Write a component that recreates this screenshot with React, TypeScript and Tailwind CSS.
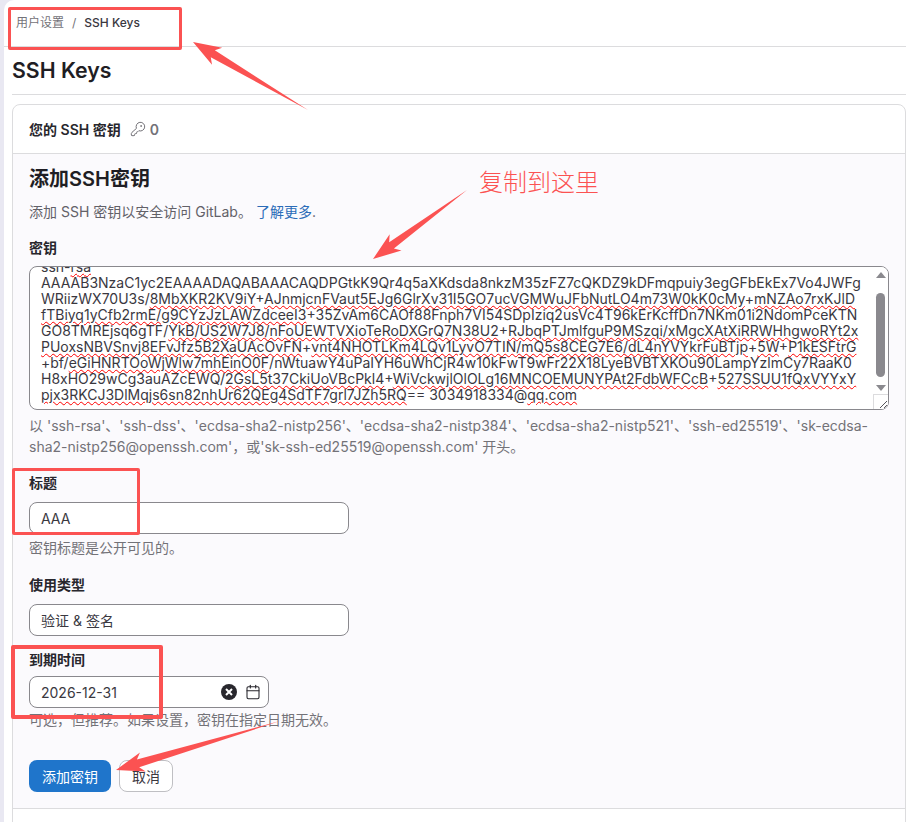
import { KeyRound, Calendar } from 'lucide-react';

const FONT = "font-['Inter','Noto_Sans_CJK_SC',sans-serif]";

// segments split on | : even index plain, odd index has the spell-check squiggle
const KEY_LINES = [
  'ssh-|rsa',
  'AAAAB3NzaC1yc2EAAAADAQABAAACAQDPGtkK9Qr4q5aXKdsda8nkzM35zFZ7cQKDZ9kDFmqpuiy3egGFbEkEx7Vo4JWFg',
  'WRiizWX70U3s/|8MbXKR2KV9iY|+|AJnmjcnFVaut5EJg6GlrXv31I5GO7ucVGMWuJFbNutLO4m73W0kK0cMy|+|mNZAo7rxKJlD',
  '|fTBiyq1yCfb2rmE/g9CYzJzLAWZdceeI3|+35ZvAm6CAOf88Fnph7VI54SDpIziq2usVc4T96kErKcffDn7NKm01i2NdomPceKTN',
  'GO8TMREjsq6gTF/|YkB/US2W7J8/nFoUEWTVXioTeRoDXGrQ7N38U2|+|RJbqPTJmlfguP9MSzqi/xMgcXAtXiRRWHhgwoRYt2x',
  '|PUoxsNBVSnvj8EFvJfz5B2XaUAcOvFN|+|vnt4NHOTLKm4LQv1LyvO7TIN/mQ5s8CEG7E6/dL4nYVYkrFuBTjp|+|5W|+|P1kESFtrG',
  '+bf/|eGiHNRTOoWjWlw7mhEinO0F|/nWtuawY4uPaIYH6uWhCjR4w10kFwT9wFr22X18LyeBVBTXKOu90LampYzlmCy7RaaK0',
  'H8xHO29wCg3auAZcEWQ/|2GsL5t37CkiUoVBcPkl4|+|WiVckwjlOlOLg16MNCOEMUNYPAt2FdbWFCcB|+|527SSUU1fQxVYYxY',
  '|pjx3RKCJ3DlMqjs6sn82nhUr62QEg4SdTF7grl7JZh5RQ|== 3034918334@|qq.com',
];

function Arrow({ x1, y1, x2, y2 }: { x1: number; y1: number; x2: number; y2: number }) {
  // tapered annotation arrow, tip at x2,y2
  const a = Math.atan2(y2 - y1, x2 - x1);
  const p = (d: number, s: number) =>
    `${x2 - Math.cos(a) * d - Math.sin(a) * s},${y2 - Math.sin(a) * d + Math.cos(a) * s}`;
  return (
    <polygon
      fill="#fb5252"
      points={`${x1},${y1} ${p(23, 4)} ${p(28, 10)} ${x2},${y2} ${p(28, -10)} ${p(23, -4)}`}
    />
  );
}

function Box({ className }: { className: string }) {
  return <div className={`absolute border-[3px] border-[#fb5252] rounded-[2px] ${className}`} />;
}

export default function App() {
  return (
    <div className={`${FONT} relative w-[906px] h-[822px] overflow-hidden bg-[#e9e8f2] pl-[4px] text-[#28272d]`}>
      <div className="h-full bg-white rounded-tl-[10px] pl-[8px]">
        <div className="h-[47px] -ml-[8px] pl-[12px] border-b border-[#dcdcde] flex items-start pt-[15px] text-[12px] leading-[16px]">
          <span className="text-[#737278]">用户设置</span>
          <span className="mx-[8px] text-[#737278]">/</span>
          <span className="text-[#3a383f] font-medium">SSH Keys</span>
        </div>

        <div className="h-[48px] border-b border-[#dcdcde] flex items-center">
          <h1 className="-mt-[2px] text-[21.3px] font-semibold text-[#1f1e24] leading-[28px]">SSH Keys</h1>
        </div>

        <div className="mt-[9px] h-[800px] border border-[#dcdcde] rounded-t-[8px]">
          <div className="h-[49px] border-b border-[#dcdcde] flex items-center pl-[16px] text-[14px] font-semibold">
            您的 SSH 密钥
            <KeyRound className="ml-[9px] w-[16px] h-[16px] text-[#737278]" strokeWidth={1.5} />
            <span className="ml-[4px] text-[#737278]">0</span>
          </div>

          <div className="h-[655px] bg-[#fbfafd] border-b border-[#dcdcde] px-[16px] pt-[12px]">
            <h2 className="text-[20px] leading-[26px] font-semibold text-[#1f1e24]">添加SSH密钥</h2>
            <p className="mt-[11px] text-[14px] leading-[18px] text-[#626168]">
              添加 SSH 密钥以安全访问 GitLab。 <span className="text-[#2b6cb8]">了解更多</span>.
            </p>

            <label className="block mt-[18px] text-[14px] leading-[18px] font-semibold">密钥</label>
            <div className="relative mt-[9px] w-[860px] h-[144px] bg-white border border-[#89888d] rounded-[8px] overflow-hidden">
              <div className="-mt-[8px] pl-[11px] text-[14px] leading-[16px] whitespace-nowrap text-[#3a383f]">
                {KEY_LINES.map((line, i) => (
                  <div key={i}>
                    {line.split('|').map((seg, j) => (
                      <span
                        key={j}
                        className={j % 2 === 1 ? 'underline decoration-wavy decoration-[#ff0000] decoration-1 underline-offset-[1px]' : ''}
                      >
                        {seg}
                      </span>
                    ))}
                  </div>
                ))}
              </div>

              <div className="absolute top-0 right-0 bottom-0 w-[15px] bg-white">
                <div className="absolute top-[5px] left-[3px] w-0 h-0 border-x-[5px] border-x-transparent border-b-[6px] border-b-[#8a898e]" />
                <div className="absolute top-[26px] left-[3px] w-[9px] h-[84px] rounded-full bg-[#8a898e]" />
                <div className="absolute top-[118px] left-[3px] w-0 h-0 border-x-[5px] border-x-transparent border-t-[6px] border-t-[#8a898e]" />
              </div>
              <div className="absolute right-0 bottom-0 w-[15px] h-[15px] bg-white border-l border-t border-[#dcdcde]">
                <svg viewBox="0 0 14 14" className="w-full h-full">
                  <path d="M13 6 L6 13 M13 10 L10 13" stroke="#55545a" strokeWidth="1" />
                </svg>
              </div>
            </div>

            <p className="mt-[5px] w-[860px] text-[14px] leading-[21px] text-[#737278]">
              以 'ssh-rsa'、'ssh-dss'、'ecdsa-sha2-nistp256'、'ecdsa-sha2-nistp384'、'ecdsa-sha2-nistp521'、'ssh-ed25519'、'sk-ecdsa-sha2-nistp256@openssh.com'，或'sk-ssh-ed25519@openssh.com' 开头。
            </p>

            <label className="block mt-[17px] text-[14px] leading-[18px] font-semibold">标题</label>
            <div className="mt-[10px] w-[320px] h-[32px] bg-white border border-[#89888d] rounded-[8px] flex items-center pl-[11px] text-[14px] text-[#3a383f]">AAA</div>
            <p className="mt-[5px] text-[14px] leading-[18px] text-[#737278]">密钥标题是公开可见的。</p>

            <label className="block mt-[19px] text-[14px] leading-[18px] font-semibold">使用类型</label>
            <div className="mt-[10px] w-[320px] h-[32px] bg-white border border-[#89888d] rounded-[8px] flex items-center pl-[11px] text-[14px] text-[#3a383f]">验证 &amp; 签名</div>

            <label className="block mt-[15px] text-[14px] leading-[18px] font-semibold">到期时间</label>
            <div className="mt-[7px] w-[240px] h-[32px] bg-white border border-[#89888d] rounded-[8px] flex items-center pl-[11px] pr-[7px] text-[14px] text-[#3a383f]">
              <span className="flex-1">2026-12-31</span>
              <svg viewBox="0 0 16 16" className="w-[16px] h-[16px]">
                <circle cx="8" cy="8" r="8" fill="#28272d" />
                <path d="M5 5 L11 11 M11 5 L5 11" stroke="#fff" strokeWidth="2" />
              </svg>
              <Calendar className="ml-[8px] w-[16px] h-[16px] text-[#28272d]" strokeWidth={1.6} />
            </div>
            <p className="mt-[3px] text-[14px] leading-[18px] text-[#737278]">可选，但推荐。如果设置，密钥在指定日期无效。</p>

            <div className="mt-[31px] flex gap-[8px]">
              <button className="w-[82px] h-[32px] rounded-[8px] bg-[#1f75cb] text-white text-[14px]">添加密钥</button>
              <button className="w-[54px] h-[32px] rounded-[8px] bg-white border border-[#bfbfc3] text-[14px] text-[#3a383f]">取消</button>
            </div>
          </div>
        </div>
      </div>

      {/* red annotations drawn over the screenshot */}
      <Box className="left-[8px] top-[7px] w-[174px] h-[43px]" />
      <Box className="left-[12px] top-[468px] w-[128px] h-[67px]" />
      <Box className="left-[11px] top-[645px] w-[152px] h-[74px] border-[4px]" />
      <svg className="absolute inset-0 pointer-events-none" width="906" height="822">
        <Arrow x1={308} y1={110} x2={193} y2={42} />
        <Arrow x1={467} y1={190} x2={373} y2={259} />
        <Arrow x1={280} y1={721} x2={116} y2={770} />
      </svg>
      <div className="absolute left-[479px] top-[165px] text-[24px] leading-[32px] font-light text-[#fb5252] font-['Noto_Sans_CJK_SC',sans-serif]">复制到这里</div>
    </div>
  );
}
